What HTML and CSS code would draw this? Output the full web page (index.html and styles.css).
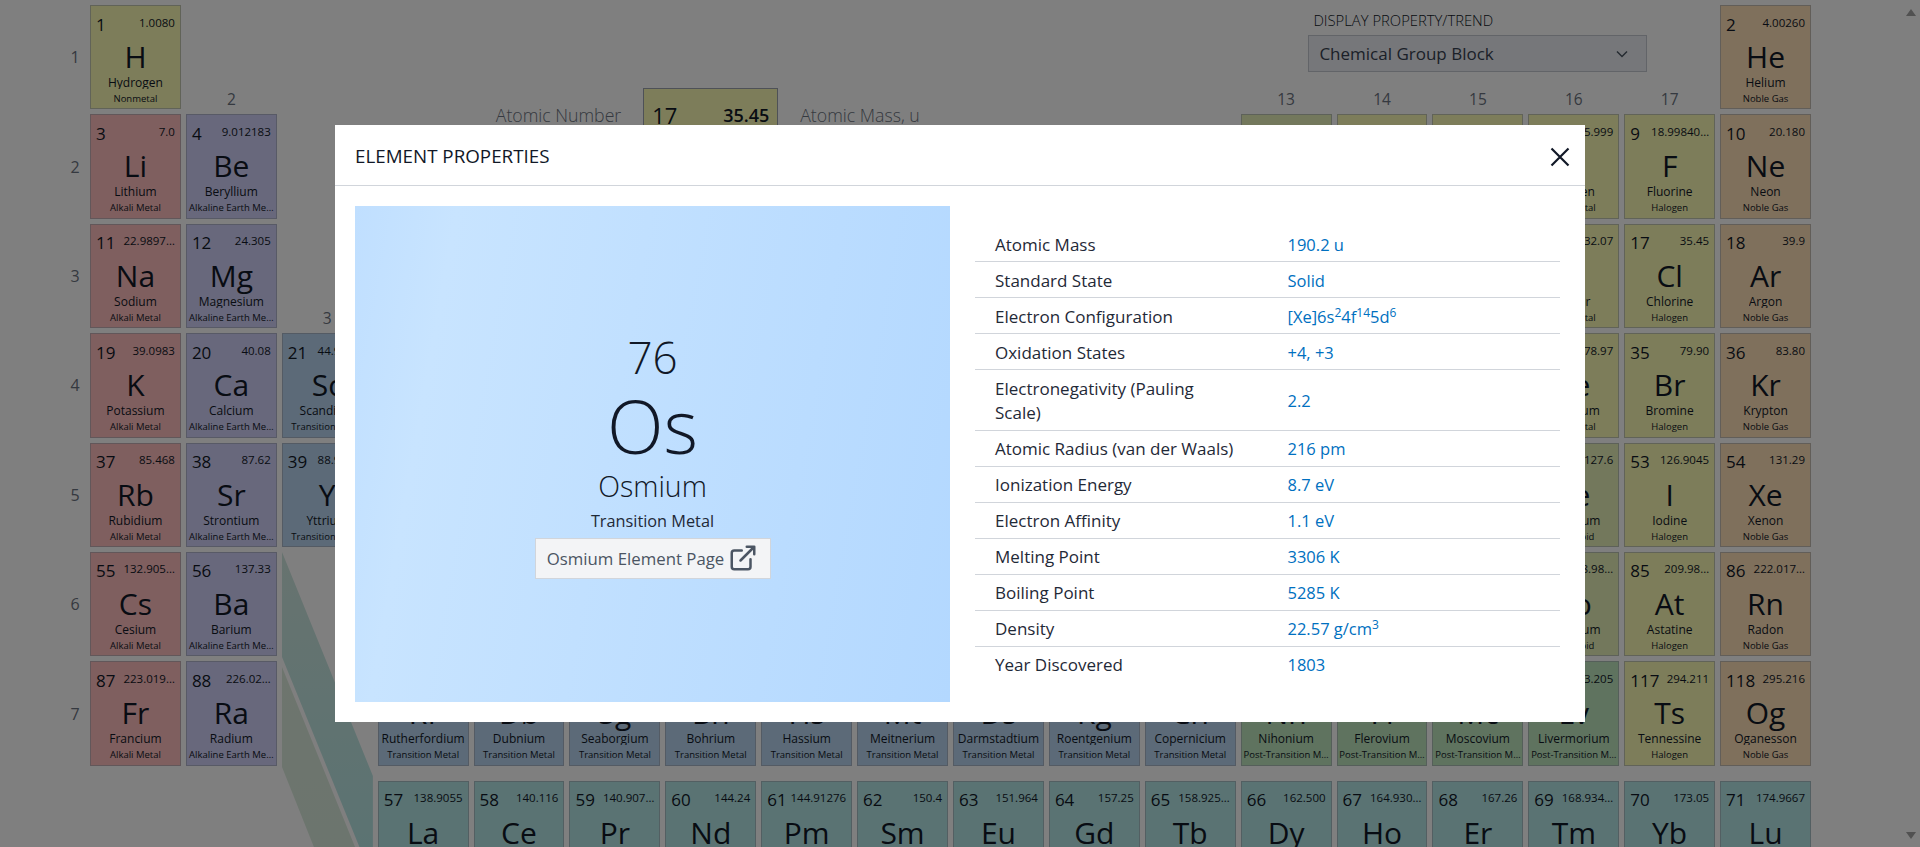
FILE: index.html
```html
<!DOCTYPE html>
<html lang="en">
<head>
<meta charset="utf-8">
<title>Periodic Table</title>
<link rel="stylesheet" href="styles.css">
</head>
<body>
<div class="page">
  <main class="table">
    <div class="period r1">1</div><div class="period r2">2</div><div class="period r3">3</div><div class="period r4">4</div><div class="period r5">5</div><div class="period r6">6</div><div class="period r7">7</div>

    <div class="group r1 c2">2</div><div class="group r3 c3">3</div><div class="group r1 c13">13</div><div class="group r1 c14">14</div><div class="group r1 c15">15</div><div class="group r1 c16">16</div><div class="group r1 c17">17</div>

    <div class="legend">
      <span class="legend-label legend-left">Atomic Number</span>
      <div class="legend-tile"><div class="top"><b>17</b><span>35.45</span></div></div>
      <span class="legend-label legend-right">Atomic Mass, u</span>
    </div>

    <div class="trend">
      <label class="trend-label">DISPLAY PROPERTY/TREND</label>
      <div class="select"><span>Chemical Group Block</span>
        <svg class="chev" viewBox="0 0 12 8"><path d="M1 1.5l5 5 5-5"/></svg>
      </div>
    </div>

    <svg class="funnel" viewBox="0 0 91 443" preserveAspectRatio="none">
      <defs>
        <linearGradient id="fa" x1="0" y1="0" x2="0" y2="1"><stop offset="0" stop-color="#cfe6df"/><stop offset="1" stop-color="#b4e6e6"/></linearGradient>
        <linearGradient id="fb" x1="0" y1="0" x2="0" y2="1"><stop offset="0" stop-color="#dcebdc"/><stop offset="1" stop-color="#d6e9dc"/></linearGradient>
      </defs>
      <polygon fill="url(#fa)" points="0,0 91,224 91,328 0,105"/>
      <polygon fill="url(#fb)" points="0,115 91,339 91,443 0,215"/>
    </svg>

    <a class="tile nonmetal r1 c1"><div class="top"><b>1</b><span>1.0080</span></div><strong>H</strong><em class="clip">Hydrogen</em><small>Nonmetal</small></a>
    <a class="tile noble r1 c18"><div class="top"><b>2</b><span>4.00260</span></div><strong>He</strong><em>Helium</em><small>Noble Gas</small></a>

    <a class="tile alkali r2 c1"><div class="top"><b>3</b><span>7.0</span></div><strong>Li</strong><em>Lithium</em><small>Alkali Metal</small></a>
    <a class="tile earth r2 c2"><div class="top"><b>4</b><span>9.012183</span></div><strong>Be</strong><em>Beryllium</em><small>Alkaline Earth Me…</small></a>
    <a class="tile metalloid r2 c13"><div class="top"><b>5</b><span>10.81</span></div><strong>B</strong><em>Boron</em><small>Metalloid</small></a>
    <a class="tile nonmetal r2 c14"><div class="top"><b>6</b><span>12.011</span></div><strong>C</strong><em>Carbon</em><small>Nonmetal</small></a>
    <a class="tile nonmetal r2 c15"><div class="top"><b>7</b><span>14.007</span></div><strong>N</strong><em>Nitrogen</em><small>Nonmetal</small></a>
    <a class="tile nonmetal r2 c16"><div class="top"><b>8</b><span>15.999</span></div><strong>O</strong><em>Oxygen</em><small>Nonmetal</small></a>
    <a class="tile nonmetal r2 c17"><div class="top"><b>9</b><span>18.99840…</span></div><strong>F</strong><em>Fluorine</em><small>Halogen</small></a>
    <a class="tile noble r2 c18"><div class="top"><b>10</b><span>20.180</span></div><strong>Ne</strong><em>Neon</em><small>Noble Gas</small></a>

    <a class="tile alkali r3 c1"><div class="top"><b>11</b><span>22.9897…</span></div><strong>Na</strong><em>Sodium</em><small>Alkali Metal</small></a>
    <a class="tile earth r3 c2"><div class="top"><b>12</b><span>24.305</span></div><strong>Mg</strong><em class="clip">Magnesium</em><small>Alkaline Earth Me…</small></a>
    <a class="tile nonmetal r3 c16"><div class="top"><b>16</b><span>32.07</span></div><strong>S</strong><em>Sulfur</em><small>Nonmetal</small></a>
    <a class="tile nonmetal r3 c17"><div class="top"><b>17</b><span>35.45</span></div><strong>Cl</strong><em>Chlorine</em><small>Halogen</small></a>
    <a class="tile noble r3 c18"><div class="top"><b>18</b><span>39.9</span></div><strong>Ar</strong><em class="clip">Argon</em><small>Noble Gas</small></a>

    <a class="tile alkali r4 c1"><div class="top"><b>19</b><span>39.0983</span></div><strong>K</strong><em>Potassium</em><small>Alkali Metal</small></a>
    <a class="tile earth r4 c2"><div class="top"><b>20</b><span>40.08</span></div><strong>Ca</strong><em>Calcium</em><small>Alkaline Earth Me…</small></a>
    <a class="tile transition r4 c3"><div class="top"><b>21</b><span>44.95591</span></div><strong>Sc</strong><em>Scandium</em><small>Transition Metal</small></a>
    <a class="tile nonmetal r4 c16"><div class="top"><b>34</b><span>78.97</span></div><strong>Se</strong><em>Selenium</em><small>Nonmetal</small></a>
    <a class="tile nonmetal r4 c17"><div class="top"><b>35</b><span>79.90</span></div><strong>Br</strong><em>Bromine</em><small>Halogen</small></a>
    <a class="tile noble r4 c18"><div class="top"><b>36</b><span>83.80</span></div><strong>Kr</strong><em>Krypton</em><small>Noble Gas</small></a>

    <a class="tile alkali r5 c1"><div class="top"><b>37</b><span>85.468</span></div><strong>Rb</strong><em>Rubidium</em><small>Alkali Metal</small></a>
    <a class="tile earth r5 c2"><div class="top"><b>38</b><span>87.62</span></div><strong>Sr</strong><em>Strontium</em><small>Alkaline Earth Me…</small></a>
    <a class="tile transition r5 c3"><div class="top"><b>39</b><span>88.90584</span></div><strong>Y</strong><em>Yttrium</em><small>Transition Metal</small></a>
    <a class="tile metalloid r5 c16"><div class="top"><b>52</b><span>127.6</span></div><strong>Te</strong><em>Tellurium</em><small>Metalloid</small></a>
    <a class="tile nonmetal r5 c17"><div class="top"><b>53</b><span>126.9045</span></div><strong>I</strong><em>Iodine</em><small>Halogen</small></a>
    <a class="tile noble r5 c18"><div class="top"><b>54</b><span>131.29</span></div><strong>Xe</strong><em>Xenon</em><small>Noble Gas</small></a>

    <a class="tile alkali r6 c1"><div class="top"><b>55</b><span>132.905…</span></div><strong>Cs</strong><em>Cesium</em><small>Alkali Metal</small></a>
    <a class="tile earth r6 c2"><div class="top"><b>56</b><span>137.33</span></div><strong>Ba</strong><em>Barium</em><small>Alkaline Earth Me…</small></a>
    <a class="tile metalloid r6 c16"><div class="top"><b>84</b><span>208.98…</span></div><strong>Po</strong><em>Polonium</em><small>Metalloid</small></a>
    <a class="tile nonmetal r6 c17"><div class="top"><b>85</b><span>209.98…</span></div><strong>At</strong><em>Astatine</em><small>Halogen</small></a>
    <a class="tile noble r6 c18"><div class="top"><b>86</b><span>222.017…</span></div><strong>Rn</strong><em>Radon</em><small>Noble Gas</small></a>

    <a class="tile alkali r7 c1"><div class="top"><b>87</b><span>223.019…</span></div><strong>Fr</strong><em>Francium</em><small>Alkali Metal</small></a>
    <a class="tile earth r7 c2"><div class="top"><b>88</b><span>226.02…</span></div><strong>Ra</strong><em>Radium</em><small>Alkaline Earth Me…</small></a>
    <a class="tile transition r7 c4"><div class="top"><b>104</b><span>267.122</span></div><strong>Rf</strong><em>Rutherfordium</em><small>Transition Metal</small></a>
    <a class="tile transition r7 c5"><div class="top"><b>105</b><span>268.126</span></div><strong>Db</strong><em>Dubnium</em><small>Transition Metal</small></a>
    <a class="tile transition r7 c6"><div class="top"><b>106</b><span>269.128</span></div><strong>Sg</strong><em class="clip">Seaborgium</em><small>Transition Metal</small></a>
    <a class="tile transition r7 c7"><div class="top"><b>107</b><span>270.133</span></div><strong>Bh</strong><em>Bohrium</em><small>Transition Metal</small></a>
    <a class="tile transition r7 c8"><div class="top"><b>108</b><span>269.1336</span></div><strong>Hs</strong><em>Hassium</em><small>Transition Metal</small></a>
    <a class="tile transition r7 c9"><div class="top"><b>109</b><span>277.154</span></div><strong>Mt</strong><em>Meitnerium</em><small>Transition Metal</small></a>
    <a class="tile transition r7 c10"><div class="top"><b>110</b><span>282.166</span></div><strong>Ds</strong><em>Darmstadtium</em><small>Transition Metal</small></a>
    <a class="tile transition r7 c11"><div class="top"><b>111</b><span>282.169</span></div><strong>Rg</strong><em class="clip">Roentgenium</em><small>Transition Metal</small></a>
    <a class="tile transition r7 c12"><div class="top"><b>112</b><span>286.179</span></div><strong>Cn</strong><em>Copernicium</em><small>Transition Metal</small></a>
    <a class="tile post r7 c13"><div class="top"><b>113</b><span>286.182</span></div><strong>Nh</strong><em>Nihonium</em><small>Post-Transition M…</small></a>
    <a class="tile post r7 c14"><div class="top"><b>114</b><span>290.192</span></div><strong>Fl</strong><em>Flerovium</em><small>Post-Transition M…</small></a>
    <a class="tile post r7 c15"><div class="top"><b>115</b><span>290.196</span></div><strong>Mc</strong><em>Moscovium</em><small>Post-Transition M…</small></a>
    <a class="tile post r7 c16"><div class="top"><b>116</b><span>293.205</span></div><strong>Lv</strong><em>Livermorium</em><small>Post-Transition M…</small></a>
    <a class="tile nonmetal r7 c17"><div class="top"><b>117</b><span>294.211</span></div><strong>Ts</strong><em>Tennessine</em><small>Halogen</small></a>
    <a class="tile noble r7 c18"><div class="top"><b>118</b><span>295.216</span></div><strong>Og</strong><em class="clip">Oganesson</em><small>Noble Gas</small></a>

    <a class="tile lan r8 c4"><div class="top"><b>57</b><span>138.9055</span></div><strong>La</strong></a>
    <a class="tile lan r8 c5"><div class="top"><b>58</b><span>140.116</span></div><strong>Ce</strong></a>
    <a class="tile lan r8 c6"><div class="top"><b>59</b><span>140.907…</span></div><strong>Pr</strong></a>
    <a class="tile lan r8 c7"><div class="top"><b>60</b><span>144.24</span></div><strong>Nd</strong></a>
    <a class="tile lan r8 c8"><div class="top"><b>61</b><span>144.91276</span></div><strong>Pm</strong></a>
    <a class="tile lan r8 c9"><div class="top"><b>62</b><span>150.4</span></div><strong>Sm</strong></a>
    <a class="tile lan r8 c10"><div class="top"><b>63</b><span>151.964</span></div><strong>Eu</strong></a>
    <a class="tile lan r8 c11"><div class="top"><b>64</b><span>157.25</span></div><strong>Gd</strong></a>
    <a class="tile lan r8 c12"><div class="top"><b>65</b><span>158.925…</span></div><strong>Tb</strong></a>
    <a class="tile lan r8 c13"><div class="top"><b>66</b><span>162.500</span></div><strong>Dy</strong></a>
    <a class="tile lan r8 c14"><div class="top"><b>67</b><span>164.930…</span></div><strong>Ho</strong></a>
    <a class="tile lan r8 c15"><div class="top"><b>68</b><span>167.26</span></div><strong>Er</strong></a>
    <a class="tile lan r8 c16"><div class="top"><b>69</b><span>168.934…</span></div><strong>Tm</strong></a>
    <a class="tile lan r8 c17"><div class="top"><b>70</b><span>173.05</span></div><strong>Yb</strong></a>
    <a class="tile lan r8 c18"><div class="top"><b>71</b><span>174.9667</span></div><strong>Lu</strong></a>
  </main>
  <div class="scroll-up"></div>
  <div class="scroll-down"></div>
</div>

<div class="overlay">
  <section class="modal">
    <header class="modal-head">
      <h2>ELEMENT PROPERTIES</h2>
      <svg class="close" viewBox="0 0 22 22"><path d="M2.5 2.5l17 17M19.5 2.5l-17 17"/></svg>
    </header>
    <div class="modal-body">
      <div class="card">
        <div class="card-num">76</div>
        <div class="card-sym">Os</div>
        <div class="card-name">Osmium</div>
        <div class="card-cat">Transition Metal</div>
        <a class="card-btn">Osmium Element Page
          <svg class="ext" viewBox="0 0 24 24"><path d="M18 13v6a2 2 0 0 1-2 2H5a2 2 0 0 1-2-2V8a2 2 0 0 1 2-2h6M15 3h6v6M10 14L21 3"/></svg>
        </a>
      </div>
      <div class="props">
        <table>
          <tr><th>Atomic Mass</th><td>190.2 u</td></tr>
          <tr><th>Standard State</th><td>Solid</td></tr>
          <tr><th>Electron Configuration</th><td>[Xe]6s<sup>2</sup>4f<sup>14</sup>5d<sup>6</sup></td></tr>
          <tr><th>Oxidation States</th><td>+4, +3</td></tr>
          <tr><th>Electronegativity (Pauling<br>Scale)</th><td>2.2</td></tr>
          <tr><th>Atomic Radius (van der Waals)</th><td>216 pm</td></tr>
          <tr><th>Ionization Energy</th><td>8.7 eV</td></tr>
          <tr><th>Electron Affinity</th><td>1.1 eV</td></tr>
          <tr><th>Melting Point</th><td>3306 K</td></tr>
          <tr><th>Boiling Point</th><td>5285 K</td></tr>
          <tr><th>Density</th><td>22.57 g/cm<sup>3</sup></td></tr>
          <tr><th>Year Discovered</th><td>1803</td></tr>
        </table>
      </div>
    </div>
  </section>
</div>
</body>
</html>
```

FILE: styles.css
```css
* { box-sizing: border-box; }
html, body { margin: 0; height: 100%; overflow: hidden; background: #fff; }
body { font-family: "Open Sans", "Noto Sans", sans-serif; color: #111827; }

.page { height: 847px; overflow: hidden; padding: 5px 109px 0 55px; }

.table {
  display: grid;
  grid-template-columns: 30px repeat(18, 1fr);
  grid-template-rows: repeat(7, 104.4px) 5px 104.4px 104.4px;
  gap: 5px;
}
.r1 { grid-row: 1; } .r2 { grid-row: 2; } .r3 { grid-row: 3; } .r4 { grid-row: 4; }
.r5 { grid-row: 5; } .r6 { grid-row: 6; } .r7 { grid-row: 7; } .r8 { grid-row: 9; }
.c1 { grid-column: 2; } .c2 { grid-column: 3; } .c3 { grid-column: 4; } .c4 { grid-column: 5; }
.c5 { grid-column: 6; } .c6 { grid-column: 7; } .c7 { grid-column: 8; } .c8 { grid-column: 9; }
.c9 { grid-column: 10; } .c10 { grid-column: 11; } .c11 { grid-column: 12; } .c12 { grid-column: 13; }
.c13 { grid-column: 14; } .c14 { grid-column: 15; } .c15 { grid-column: 16; } .c16 { grid-column: 17; }
.c17 { grid-column: 18; } .c18 { grid-column: 19; }

.period {
  grid-column: 1; display: flex; align-items: center; justify-content: center; padding-left: 10px;
  font-size: 16px; color: #6b7280;
}
.group {
  display: flex; align-items: flex-end; justify-content: center;
  font-size: 15.5px; line-height: 20px; color: #6b7280;
}

.tile {
  display: flex; flex-direction: column; align-items: center;
  min-width: 0; overflow: hidden; padding: 6px 5px 0;
  border: 1px solid rgba(156, 163, 175, .6); color: #111827;
  white-space: nowrap;
}
.top { display: flex; align-self: stretch; justify-content: space-between; align-items: center; height: 24px; }
.top b { font-size: 17px; font-weight: 500; }
.top span { font-size: 11.5px; font-weight: 500; margin-bottom: 4px; }
.tile strong { font-size: 30px; line-height: 36px; font-weight: 500; margin-top: 3px; }
.tile em { font-style: normal; font-size: 12px; line-height: 15px; height: 15px; margin-bottom: -1px; }
.tile em.clip { height: 14px; margin-bottom: 0; overflow: hidden; }
.tile small { font-size: 9.5px; line-height: 14px; margin-top: 3px; }

.nonmetal { background: #fafab4; }
.noble { background: #ffe0b8; }
.alkali { background: #ffbebe; }
.earth { background: #d0d0f8; }
.transition { background: #b8d4f0; }
.metalloid { background: #e6f0b8; }
.post { background: #bee6be; }
.lan { background: #b4e6e6; }

.legend {
  grid-column: 4 / 13; grid-row: 1 / 3; display: flex; justify-content: center;
  align-items: flex-start; padding: 83px 6px 0 0; gap: 22px;
}
.legend-label { font-size: 17.7px; font-weight: 300; color: #6b7280; margin-top: 15px; white-space: nowrap; }
.legend-right { border-bottom: 1px dashed #9ca3af; height: 35px; }
.legend-tile { width: 135px; height: 150px; background: #fafab4; border: 1px solid #9ca3af; padding: 14px 8px; }
.legend-tile b { font-size: 22px; font-weight: 500; }
.legend-tile span { font-size: 18px; font-weight: 600; margin-bottom: 0; }

.trend { grid-column: 14 / 19; grid-row: 1; display: flex; flex-direction: column; align-items: center; padding-top: 4px; }
.trend-label { width: 339px; padding-left: 5px; font-size: 14.8px; line-height: 22px; font-weight: 300; color: #111827; }
.select {
  width: 339px; height: 37px; margin-top: 4px; padding: 0 18px 0 10px;
  display: flex; align-items: center; justify-content: space-between;
  background: #eceff4; border: 1px solid #c4c9d1; color: #374151;
  font-size: 17px; font-weight: 500;
}
.chev { width: 12px; height: 8px; fill: none; stroke: #4b5563; stroke-width: 1.5; }

.funnel { grid-column: 4; grid-row: 6 / 11; width: 100%; height: 443px; display: block; }

.scroll-up, .scroll-down { position: fixed; left: 1906px; width: 0; height: 0; border-left: 5px solid transparent; border-right: 5px solid transparent; }
.scroll-up { top: 9px; border-bottom: 7px solid #a3a3a3; }
.scroll-down { top: 832px; border-top: 7px solid #a3a3a3; }

.overlay { position: fixed; inset: 0; display: flex; align-items: center; justify-content: center; background: rgba(0, 0, 0, .5); }
.modal { width: 1250px; height: 597px; background: #fff; display: flex; flex-direction: column; }
.modal-head {
  height: 61px; flex: none; padding: 0 11px 0 20px; display: flex; align-items: center; justify-content: space-between;
  border-bottom: 1px solid #d1d5db;
}
.modal-head h2 { margin: 1px 0 0; font-size: 18.8px; font-weight: 400; color: #111827; }
.close { width: 22px; height: 22px; margin: 3px 3px 0 0; fill: none; stroke: #111827; stroke-width: 2.2; }

.modal-body { flex: 1; display: grid; grid-template-columns: 595px 1fr; gap: 25px; padding: 20px 25px 20px 20px; min-height: 0; }
.card {
  display: flex; flex-direction: column; align-items: center; justify-content: center;
  background: linear-gradient(100deg, #c0dfff 0%, #c8e4ff 15%, #b3d8ff 100%);
  color: #111827;
}
.card-num { font-size: 44px; line-height: 54px; font-weight: 350; }
.card-sym { font-size: 74px; line-height: 84px; font-weight: 350; }
.card-name { font-size: 28.5px; line-height: 36px; margin-bottom: 2px; font-weight: 350; }
.card-cat { font-size: 16.3px; line-height: 30px; font-weight: 400; color: #1f2937; }
.card-btn {
  display: flex; align-items: center; gap: 4px; width: 236px; height: 41px; margin-top: 2px; justify-content: center;
  background: #f3f4f6; border: 1px solid #d1d5db; color: #4b5563;
  font-size: 16.8px; font-weight: 500;
}
.ext { width: 30px; height: 30px; flex: none; fill: none; stroke: #4b5563; stroke-width: 2; stroke-linecap: round; stroke-linejoin: round; }

.props { display: flex; align-items: center; }
.props table { width: 100%; border-collapse: collapse; table-layout: fixed; }
.props tr { border-bottom: 1px solid #d1d5db; }
.props tr:last-child { border-bottom: 0; }
.props th, .props td { padding: 6.25px 20px 4.25px; line-height: 24.5px; text-align: left; }
.props th { font-size: 17px; font-weight: 500; color: #1f2937; }
.props td { font-size: 16.5px; font-weight: 400; color: #0070c0; }
.props sup { font-size: 12px; line-height: 0; }
```
